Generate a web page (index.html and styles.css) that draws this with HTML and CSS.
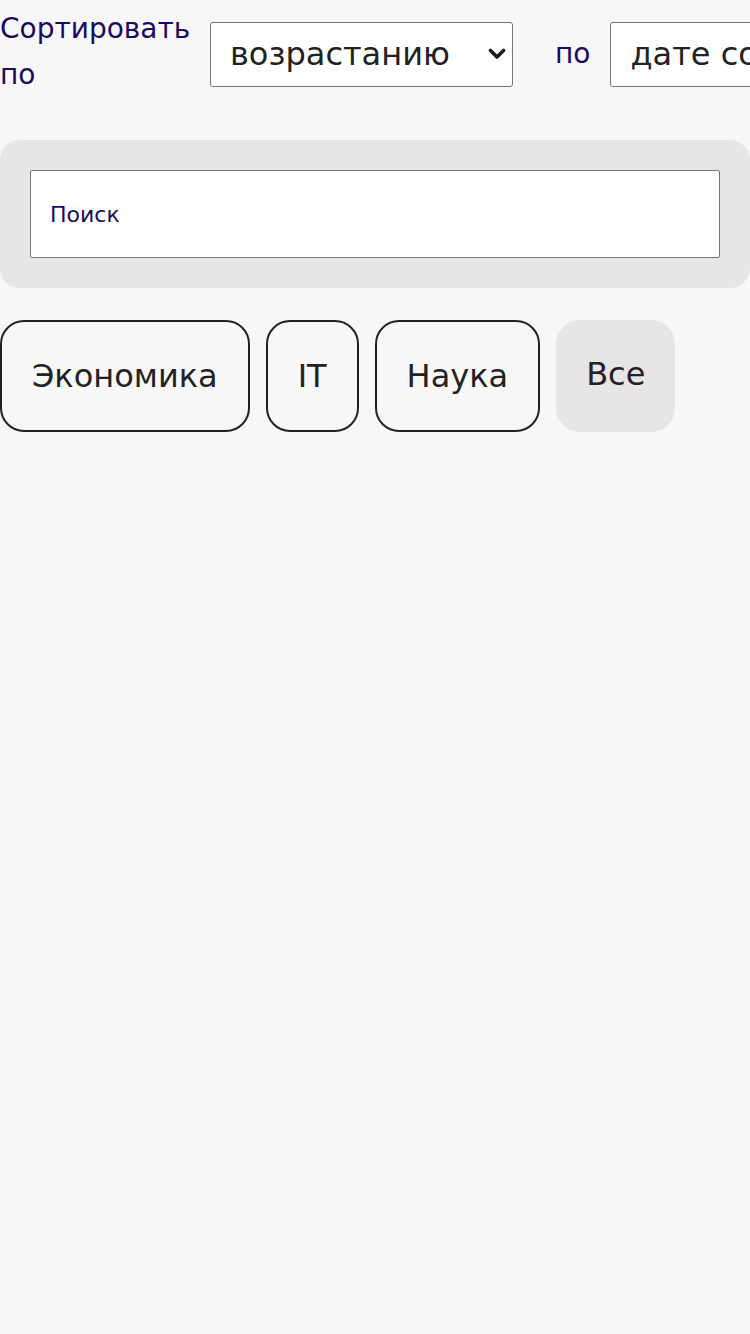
FILE: index.html
```html
<!DOCTYPE html>
<html lang="ru">
<head>
<meta charset="utf-8">
<title>Новости</title>
<link rel="stylesheet" href="styles.css">
</head>
<body>
<div class="page">
  <div class="sort-row">
    <label class="sort-label">Сортировать по</label>
    <div class="select-wrap">
      <select class="sort-select">
        <option>возрастанию</option>
        <option>убыванию</option>
      </select>
      <svg class="chevron" width="18" height="12" viewBox="0 0 18 12"><polyline points="2.5,2.5 9,9 15.5,2.5" fill="none" stroke="#1a1a1a" stroke-width="3.6" stroke-linecap="round" stroke-linejoin="round"/></svg>
    </div>
    <span class="sort-by">по</span>
    <div class="select-wrap">
      <select class="sort-select">
        <option>дате создания</option>
        <option>названию</option>
      </select>
      <svg class="chevron" width="18" height="12" viewBox="0 0 18 12"><polyline points="2.5,2.5 9,9 15.5,2.5" fill="none" stroke="#1a1a1a" stroke-width="3.6" stroke-linecap="round" stroke-linejoin="round"/></svg>
    </div>
  </div>
  <div class="search-panel">
    <input class="search-input" type="text" placeholder="Поиск">
  </div>
  <div class="tags">
    <button class="tag">Экономика</button>
    <button class="tag">IT</button>
    <button class="tag">Наука</button>
    <button class="tag tag-all">Все</button>
  </div>
</div>
</body>
</html>
```

FILE: styles.css
```css
html, body {
  margin: 0;
  padding: 0;
  background: #f7f7f7;
}
body {
  font-family: "DejaVu Sans", sans-serif;
  overflow: hidden;
}
.page {
  width: 750px;
}
.sort-row {
  display: flex;
  align-items: flex-start;
  gap: 20px;
  white-space: nowrap;
  padding-top: 6px;
}
.sort-label {
  width: 190px;
  white-space: normal;
  font-size: 28px;
  line-height: 46px;
  color: #1c0a5e;
  flex-shrink: 0;
}
.sort-by {
  font-size: 28px;
  line-height: 46px;
  color: #1c0a5e;
  margin-left: 22px;
  margin-top: 25px;
  flex-shrink: 0;
}
.select-wrap {
  position: relative;
  flex-shrink: 0;
  margin-top: 16px;
}
.sort-select {
  display: block;
  -webkit-appearance: none;
  appearance: none;
  font-family: "DejaVu Sans", sans-serif;
  font-size: 32px;
  line-height: 39px;
  color: #222;
  background: #fff;
  border: 1px solid #767676;
  border-radius: 3px;
  padding: 12px 62px 12px 19px;
  margin: 0;
}
.chevron {
  position: absolute;
  right: 7px;
  top: 26px;
  pointer-events: none;
}
.search-panel {
  margin-top: 42px;
  background: #e7e5e6;
  border-radius: 20px;
  padding: 30px;
}
.search-input {
  display: block;
  box-sizing: border-box;
  width: 100%;
  height: 88px;
  border: 1px solid #767676;
  border-radius: 2px;
  background: #fff;
  padding: 0 19px;
  font-family: "DejaVu Sans", sans-serif;
  font-size: 22px;
  color: #222;
}
.search-input::placeholder {
  color: #1c0a5e;
  opacity: 1;
}
.tags {
  display: flex;
  gap: 16px;
  margin-top: 32px;
}
.tag {
  font-family: "DejaVu Sans", sans-serif;
  font-size: 32px;
  line-height: 40px;
  color: #222;
  background: transparent;
  border: 2px solid #222;
  border-radius: 24px;
  padding: 34px 30px;
  margin: 0;
}
.tag-all {
  background: #e7e5e6;
  border-color: #e7e5e6;
  padding: 32px 28px 36px;
}
```
